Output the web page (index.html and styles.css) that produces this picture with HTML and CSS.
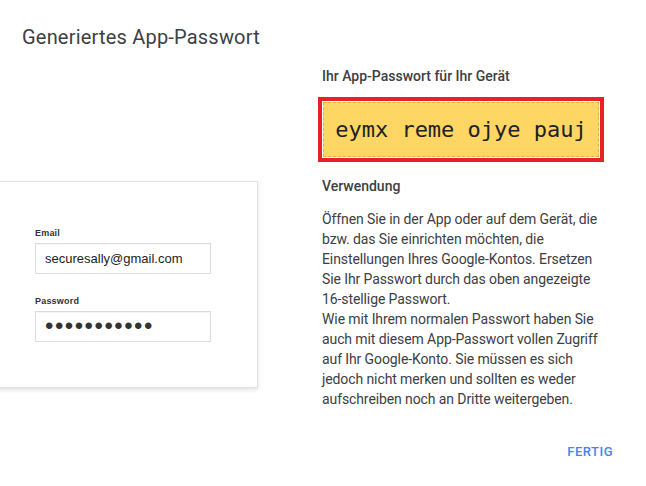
FILE: index.html
```html
<!DOCTYPE html>
<html lang="de">
<head>
<meta charset="utf-8">
<link rel="stylesheet" href="styles.css">
</head>
<body>
<div class="dialog">
  <h1 class="title">Generiertes App-Passwort</h1>
  <div class="content">
    <div class="left">
      <div class="card">
        <div class="field">
          <div class="label">Email</div>
          <div class="input">securesally@gmail.com</div>
        </div>
        <div class="field">
          <div class="label">Password</div>
          <div class="input dots">•••••••••••</div>
        </div>
      </div>
    </div>
    <div class="right">
      <div class="subhead">Ihr App-Passwort für Ihr Gerät</div>
      <div class="pw-outer">
        <div class="pw-inner">eymx reme ojye pauj</div>
      </div>
      <div class="subhead usage">Verwendung</div>
      <p class="text">Öffnen Sie in der App oder auf dem Gerät, die bzw. das Sie einrichten möchten, die Einstellungen Ihres Google-Kontos. Ersetzen Sie Ihr Passwort durch das oben angezeigte 16-stellige Passwort.<br>Wie mit Ihrem normalen Passwort haben Sie auch mit diesem App-Passwort vollen Zugriff auf Ihr Google-Konto. Sie müssen es sich jedoch nicht merken und sollten es weder aufschreiben noch an Dritte weitergeben.</p>
      <div class="actions"><span class="btn">FERTIG</span></div>
    </div>
  </div>
</div>
</body>
</html>
```
FILE: styles.css
```css
* { box-sizing: border-box; }
html, body { margin: 0; padding: 0; background: #fff; }
body { width: 646px; height: 486px; overflow: hidden; font-family: Roboto, "Noto Sans", sans-serif; color: #3c4043; }
.dialog { padding: 24px 0 0 0; }
.title { margin: 0 0 0 22px; font-size: 20px; font-weight: 400; line-height: 26px; color: #3c4043; letter-spacing: 0.2px; }
.content { display: flex; margin-top: 17px; }
.left { width: 322px; flex: none; padding-top: 114px; overflow: hidden; }
.card { width: 300px; margin-left: -42px; height: 207px; background: #fff; border: 1px solid #e2e2e2; box-shadow: 0 2px 4px rgba(0,0,0,0.12); padding: 45px 0 0 76px; font-family: "Liberation Sans", Arial, sans-serif; }
.field { margin-bottom: 21px; }
.label { font-size: 9px; font-weight: 700; color: #333; line-height: 12px; margin-bottom: 4px; letter-spacing: 0.2px; }
.input { width: 176px; height: 31px; border: 1px solid #dcdcdc; box-shadow: inset 0 1px 1px rgba(0,0,0,0.04); padding: 0 9px; font-size: 13px; line-height: 29px; color: #222; white-space: nowrap; }
.input.dots { font-size: 24px; letter-spacing: 1.5px; color: #333; line-height: 28px; }
.right { width: 300px; }
.subhead { font-size: 14px; font-weight: 500; line-height: 18px; color: #3c4043; margin-top: 0; }
.pw-outer { margin: 12px 0 0 -4px; width: 286px; height: 65px; border: 4px solid #e8202a; background: #fff; padding: 1px; }
.pw-inner { height: 100%; background: #fdd663; border: 1px dashed #e0b04a; font-family: "DejaVu Sans Mono", monospace; font-size: 22px; color: #202124; display: flex; align-items: center; justify-content: center; padding-bottom: 1px; }
.usage { margin-top: 15px; }
.text { margin: 14px 0 0 0; font-size: 14px; line-height: 20px; color: #3c4043; width: 289px; letter-spacing: -0.1px; }
.actions { display: flex; justify-content: flex-end; margin-top: 35px; width: 291px; }
.btn { font-size: 13px; font-weight: 500; color: #4285f4; letter-spacing: 0.5px; }
```
